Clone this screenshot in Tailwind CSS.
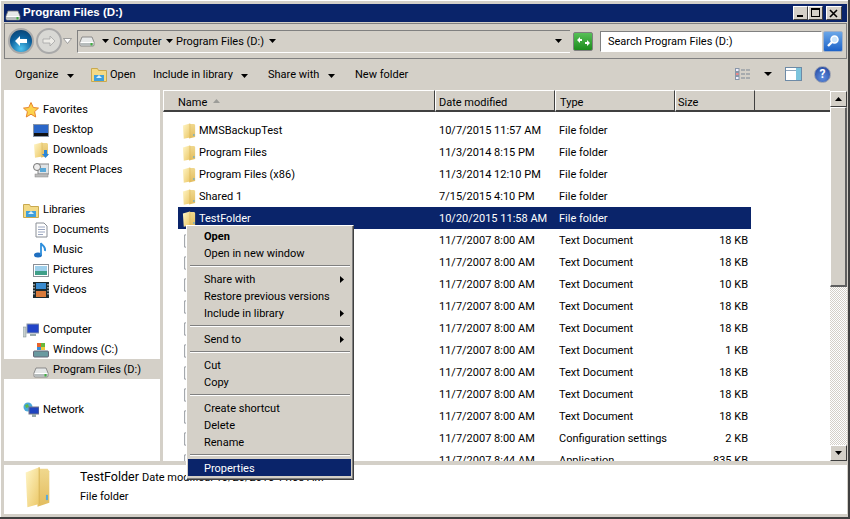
<!DOCTYPE html>
<html><head><meta charset="utf-8">
<script src="https://cdn.jsdelivr.net/npm/@tailwindcss/browser@4"></script>
</head>
<body class="w-[850px] h-[519px] overflow-hidden whitespace-nowrap bg-[#d4d0c8] font-['Roboto','Noto_Sans',sans-serif] text-[11px] text-black">
<svg width="0" height="0" class="absolute">
<defs>
<linearGradient id="fy" x1="0" y1="0" x2="1" y2="1"><stop offset="0" stop-color="#fff6c8"/><stop offset="1" stop-color="#ecc868"/></linearGradient>
<linearGradient id="fb" x1="0" y1="0" x2="0" y2="1"><stop offset="0" stop-color="#f0d88e"/><stop offset="1" stop-color="#e2bc5e"/></linearGradient>
<symbol id="folder" viewBox="0 0 16 16" preserveAspectRatio="none"><path d="M8 1h6l1 1v12l-7 1.500z" fill="url(#fb)"/><path d="M1 2.500 9 .5v14l-7 1.200z" fill="url(#fy)"/><path d="M9 .5v14" stroke="#d9b658" stroke-width=".6"/><rect x="13" y="11" width="1.200" height="2" fill="#5aa9d8"/></symbol>
<symbol id="drive" viewBox="0 0 16 12"><path d="M3 2h10l2 5v3a1 1 0 0 1-1 1H2a1 1 0 0 1-1-1V7z" fill="#e6e8e8" stroke="#777" stroke-width=".8"/><path d="M1.500 7.500h13" stroke="#fff"/><rect x="2" y="8" width="12" height="2.500" fill="#b6bcbc"/><rect x="11.500" y="8" width="2" height="2.500" fill="#3fb03f"/></symbol>
<symbol id="doc" viewBox="0 0 16 16"><path d="M3 1h8l3 3v11H3z" fill="#fff" stroke="#8a8f96"/><path d="M5 5h7M5 7.500h7M5 10h7M5 12.500h5" stroke="#9aa6c0"/></symbol>
</defs>
</svg>
<div class="w-[850px] h-[519px] relative flex flex-col bg-[#d4d0c8] border-b-[2px] border-b-[#404040] border-r-[2px] border-r-[#404040]">
<div class="flex-1 min-h-0 flex flex-col pl-[3px] pr-[1px] pt-[4px] pb-[3px] border-l border-t border-white">
  <!-- title -->
  <div class="h-[18px] mt-[-1px] shrink-0 bg-[#0a246a] flex items-center pl-[1px] pr-[5px] text-white">
    <svg class="w-4 h-3 mt-[3px]"><use href="#drive"/></svg>
    <span class="ml-[2px] font-['Liberation_Sans',sans-serif] font-bold text-[11.5px] leading-none">Program Files (D:)</span>
    <div class="ml-auto flex">
      <div class="w-[15px] h-[14px] bg-[#d4d0c8] border border-[#fff] border-r-[#404040] border-b-[#404040] relative"><div class="absolute left-[3px] top-[8px] w-[6px] h-[2px] bg-black"></div></div>
      <div class="w-[15px] h-[14px] ml-0 bg-[#d4d0c8] border border-[#fff] border-r-[#404040] border-b-[#404040] relative"><div class="absolute left-[2px] top-[1px] w-[9px] h-[9px] border border-black border-t-2"></div></div>
      <div class="w-[16px] h-[14px] ml-[3px] bg-[#d4d0c8] border border-[#fff] border-r-[#404040] border-b-[#404040] flex items-center justify-center"><svg width="10" height="9" viewBox="0 0 10 9"><path d="M1 1l7 7M8 1l-7 7" stroke="#000" stroke-width="1.600"/></svg></div>
    </div>
  </div>
  <!-- address -->
  <div class="h-[36px] shrink-0 mt-[1px] border border-[#808080] flex items-center pl-[3px] pr-[1px]">
    <div class="w-[26px] h-[26px] shrink-0 rounded-full bg-[radial-gradient(circle_at_50%_85%,#4fc4f0,#0a5f9c_55%,#0b3a66)] border-[2px] border-[#a9a9a9] flex items-center justify-center"><svg width="14" height="12" viewBox="0 0 14 12"><path d="M1 6l5-5v3h7v4H6v3z" fill="#fff"/></svg></div>
    <div class="w-[26px] h-[26px] shrink-0 rounded-full bg-[#d8d8d4] border-[2px] border-[#a9a9a9] flex items-center justify-center ml-[2px]"><svg width="14" height="12" viewBox="0 0 14 12"><path d="M13 6L8 1v3H1v4h7v3z" fill="#ecebe6" stroke="#a5a5a5" stroke-width=".8"/></svg></div>
    <svg class="ml-[1px] shrink-0" width="9" height="6" viewBox="0 0 9 6"><path d="M.5.500h8l-4 5z" fill="#fff" stroke="#8c8c8c" stroke-width=".8"/></svg>
    <div class="ml-[5px] w-[493px] shrink-0 h-[23px] border-t border-l border-[#808080] border-b border-b-white flex items-center">
      <svg class="w-4 h-3 ml-[1px]"><use href="#drive"/></svg>
      <svg class="ml-[7px]" width="7" height="4" viewBox="0 0 7 4"><path d="M0 0h7L3.500 4z"/></svg>
      <span class="ml-[4px] w-[46px] pt-[2px]">Computer</span>
      <svg class="ml-[7px]" width="7" height="4" viewBox="0 0 7 4"><path d="M0 0h7L3.500 4z"/></svg>
      <span class="ml-[3px] w-[86px] pt-[2px]">Program Files (D:)</span>
      <svg class="ml-[7px]" width="7" height="4" viewBox="0 0 7 4"><path d="M0 0h7L3.500 4z"/></svg>
      <svg class="ml-auto mr-[8px]" width="7" height="4" viewBox="0 0 7 4"><path d="M0 0h7L3.500 4z"/></svg>
    </div>
    <div class="ml-[3px] w-[20px] h-[19px] shrink-0 rounded-[2px] bg-[linear-gradient(#58c058,#1c8c1c)] border border-[#808080] flex items-center justify-center"><svg width="15" height="11" viewBox="0 0 15 11"><path d="M1 4l3-3v2h2v2H4v2zM14 7l-3 3V8H9V6h2V4z" fill="#fff"/></svg></div>
    <div class="ml-[7px] w-[222px] h-[21px] shrink-0 bg-white border border-[#808080] border-r-white border-b-white flex items-center pl-[7px] pt-[2px]">Search Program Files (D:)</div>
    <div class="w-[20px] h-[21px] shrink-0 ml-[1px] rounded-[2px] bg-[linear-gradient(#6aa6e8,#1c62c8)] border border-[#a0b0c8] flex items-center justify-center"><svg width="14" height="14" viewBox="0 0 14 14"><circle cx="8.500" cy="5.500" r="3.500" fill="#cfe6fa" stroke="#fff" stroke-width="1.500"/><path d="M6 8l-4 4" stroke="#fff" stroke-width="2.400"/></svg></div>
  </div>
  <!-- toolbar -->
  <div class="h-[31px] shrink-0 flex items-center pl-[11px] pr-[16px] pt-[2px]">
    <span class="w-[44px] shrink-0">Organize</span>
    <svg class="ml-[8px] shrink-0" width="7" height="4" viewBox="0 0 7 4"><path d="M0 0h7L3.500 4z"/></svg>
    <svg class="ml-[17px] shrink-0 mb-[2px]" width="16" height="15" viewBox="0 0 16 15"><path d="M.5 1.500h6l1 2h8v11H.5z" fill="#f3da86" stroke="#c9a94f"/><rect x="3" y="8" width="10" height="6" fill="#3f9fdc"/><path d="M5 11l3-3 3 3z" fill="#d8f0fb"/></svg>
    <span class="ml-[3px] w-[27px] shrink-0">Open</span>
    <span class="ml-[16px] w-[79px] shrink-0">Include in library</span>
    <svg class="ml-[9px] shrink-0" width="7" height="4" viewBox="0 0 7 4"><path d="M0 0h7L3.500 4z"/></svg>
    <span class="ml-[20px] w-[51px] shrink-0">Share with</span>
    <svg class="ml-[9px] shrink-0" width="7" height="4" viewBox="0 0 7 4"><path d="M0 0h7L3.500 4z"/></svg>
    <span class="ml-[20px] shrink-0">New folder</span>
    <svg class="ml-auto mb-[3px]" width="16" height="12" viewBox="0 0 16 12"><rect x=".5" y=".5" width="3.500" height="3" fill="#eef" stroke="#8896a8"/><rect x=".5" y="4.500" width="3.500" height="3" fill="#e88" stroke="#8896a8"/><rect x=".5" y="8.500" width="3.500" height="3" fill="#eef" stroke="#8896a8"/><path d="M6 2h9M6 6h9M6 10h9" stroke="#7a8694" stroke-dasharray="4 1"/></svg>
    <svg class="ml-[13px] mb-[3px]" width="8" height="4" viewBox="0 0 8 4"><path d="M0 0h8L4 4z"/></svg>
    <svg class="ml-[13px] mb-[3px]" width="17" height="14" viewBox="0 0 17 14"><rect x=".5" y=".5" width="16" height="13" fill="#fff" stroke="#6d8aa6"/><path d="M1 3.500h10" stroke="#8fa6bc"/><rect x="11" y="1" width="5" height="12" fill="#7cc4dc"/></svg>
    <div class="ml-[12px] mb-[3px] w-[17px] h-[17px] rounded-full bg-[radial-gradient(circle_at_50%_70%,#5f8fe0,#1e3f98)] border border-[#9aa0b0] flex items-center justify-center text-white font-bold text-[12px] leading-none">?</div>
  </div>
  <!-- body -->
  <div class="flex-1 min-h-0 flex">
    <nav class="w-[156px] bg-white shrink-0 pt-[9px] leading-[20px] flex flex-col">
      <div class="h-[20px] pt-[2px] flex items-center pl-[19px]"><svg width="16" height="16" viewBox="0 0 16 16"><path d="M8 .5l2.300 5 5.200.6-3.900 3.500 1.100 5.400L8 12.200 3.300 15l1.100-5.400L.5 6.100l5.200-.6z" fill="#fcd34d" stroke="#e8842c"/></svg><span class="ml-[4px]">Favorites</span></div>
      <div class="h-[20px] pt-[2px] flex items-center pl-[29px]"><svg width="16" height="13" viewBox="0 0 16 13"><rect width="16" height="13" fill="#8895a8"/><rect x="1" y="1" width="14" height="8" fill="#2a66c8"/><rect x="1" y="9" width="14" height="3" fill="#111"/></svg><span class="ml-[4px]">Desktop</span></div>
      <div class="h-[20px] pt-[2px] flex items-center pl-[29px]"><svg width="16" height="16" viewBox="0 0 16 16"><use href="#folder"/><path d="M11 8h3v4h2l-3.500 4L9 12h2z" fill="#2a86d8"/></svg><span class="ml-[4px]">Downloads</span></div>
      <div class="h-[20px] pt-[2px] flex items-center pl-[29px]"><svg width="16" height="15" viewBox="0 0 16 15"><rect x="5" y="1" width="11" height="10" fill="#dfe3e6" stroke="#888"/><circle cx="4" cy="4" r="3.500" fill="#eee" stroke="#777"/><rect x="7" y="5" width="6" height="4" fill="#5aa9d8"/><rect x="2" y="11" width="13" height="3" fill="#bbb" stroke="#888" stroke-width=".5"/></svg><span class="ml-[4px]">Recent Places</span></div>
      <div class="h-[20px]"></div>
      <div class="h-[20px] pt-[2px] flex items-center pl-[19px]"><svg width="16" height="15" viewBox="0 0 16 15"><path d="M.5 1.500h6l1 2h8v11H.5z" fill="#f3da86" stroke="#c9a94f"/><rect x="3" y="8" width="10" height="6" fill="#3f9fdc"/><path d="M5 11l3-3 3 3z" fill="#d8f0fb"/></svg><span class="ml-[4px]">Libraries</span></div>
      <div class="h-[20px] pt-[2px] flex items-center pl-[29px]"><svg width="16" height="16" viewBox="0 0 16 16"><use href="#doc"/></svg><span class="ml-[4px]">Documents</span></div>
      <div class="h-[20px] pt-[2px] flex items-center pl-[29px]"><svg width="16" height="16" viewBox="0 0 16 16"><ellipse cx="5" cy="13" rx="4" ry="2.500" fill="#1f6fc0"/><path d="M8 13V1c1 3 5 3 4 8" fill="none" stroke="#2f8fdc" stroke-width="1.800"/></svg><span class="ml-[4px]">Music</span></div>
      <div class="h-[20px] pt-[2px] flex items-center pl-[29px]"><svg width="16" height="13" viewBox="0 0 16 13"><rect x=".5" y=".5" width="15" height="12" fill="#fff" stroke="#8a8f96"/><rect x="2" y="2" width="12" height="5" fill="#9fd0ec"/><rect x="2" y="7" width="12" height="4" fill="#3f9f88"/></svg><span class="ml-[4px]">Pictures</span></div>
      <div class="h-[20px] pt-[2px] flex items-center pl-[29px]"><svg width="16" height="16" viewBox="0 0 16 16"><rect width="16" height="16" fill="#1c2a2e"/><rect x="3" y="1" width="10" height="6" fill="#3a8cd0"/><rect x="3" y="9" width="10" height="6" fill="#d87a3a"/><path d="M1 2v12M15 2v12" stroke="#fff" stroke-dasharray="1.500 1.500"/></svg><span class="ml-[4px]">Videos</span></div>
      <div class="h-[20px]"></div>
      <div class="h-[20px] pt-[2px] flex items-center pl-[19px]"><svg width="16" height="15" viewBox="0 0 16 15"><rect x="4" y="1" width="12" height="9" fill="#2244c8" stroke="#8a96a8"/><rect x="7" y="11" width="6" height="2" fill="#9aa"/><rect x="0" y="4" width="3" height="10" fill="#c8d0d0" stroke="#7a8a8a" stroke-width=".5"/></svg><span class="ml-[4px]">Computer</span></div>
      <div class="h-[20px] pt-[2px] flex items-center pl-[29px]"><svg width="16" height="15" viewBox="0 0 16 15"><rect x="4" y="0" width="4" height="4" fill="#e8642c"/><rect x="8" y="0" width="4" height="4" fill="#68b83c"/><rect x="4" y="4" width="4" height="3" fill="#3a8cd8"/><rect x="8" y="4" width="4" height="3" fill="#f0c83c"/><rect x=".5" y="8" width="15" height="6" rx="1" fill="#6a9aa0" stroke="#667"/></svg><span class="ml-[4px]">Windows (C:)</span></div>
      <div class="h-[20px] pt-[2px] flex items-center pl-[29px] bg-[#d4d0c8]"><svg width="16" height="12" viewBox="0 0 16 12" class="mt-[3px]"><use href="#drive"/></svg><span class="ml-[4px]">Program Files (D:)</span></div>
      <div class="h-[20px]"></div>
      <div class="h-[20px] pt-[2px] flex items-center pl-[19px]"><svg width="16" height="16" viewBox="0 0 16 16"><circle cx="5" cy="5" r="4.500" fill="#4aa8dc"/><path d="M2 3l3-1 1 3-3 1z" fill="#5cb84c"/><rect x="6" y="5" width="10" height="7" fill="#1f44c0" stroke="#778"/><rect x="9" y="12" width="4" height="3" fill="#9aa"/></svg><span class="ml-[4px]">Network</span></div>
    </nav>
    <div class="w-[3px] shrink-0"></div>
    <main class="flex-1 min-w-0 bg-white flex">
      <div class="flex-1 min-w-0 overflow-hidden">
        <div class="h-[22px] flex bg-[#d4d0c8] leading-[16px]">
          <div class="w-[272px] shrink-0 border-t border-l border-white border-b-[2px] border-b-[#404040] border-r border-r-[#404040] pl-[14px] pt-[4px] flex items-start">Name<svg class="ml-[6px] mt-[4px]" width="7" height="4" viewBox="0 0 7 4"><path d="M0 4h7L3.500 0z" fill="#9c9c98"/></svg></div>
          <div class="w-[120px] shrink-0 border-t border-l border-white border-b-[2px] border-b-[#404040] border-r border-r-[#404040] pl-[3px] pt-[4px]">Date modified</div>
          <div class="w-[120px] shrink-0 border-t border-l border-white border-b-[2px] border-b-[#404040] border-r border-r-[#404040] pl-[4px] pt-[4px]">Type</div>
          <div class="w-[80px] shrink-0 border-t border-l border-white border-b-[2px] border-b-[#404040] border-r border-r-[#404040] pl-[2px] pt-[4px]">Size</div>
          <div class="flex-1 border-t border-white border-b-[2px] border-b-[#404040]"></div>
        </div>
        <div class="pt-[7px] ml-[15px] w-[573px] text-black">
          <div class="h-[22px] pt-[2px] flex items-center"><svg class="ml-[4px] w-[14px] h-4"><use href="#folder"/></svg><span class="ml-[3px] w-[240px]">MMSBackupTest</span><span class="w-[120px]">10/7/2015 11:57 AM</span><span class="w-[100px]">File folder</span></div>
          <div class="h-[22px] pt-[2px] flex items-center"><svg class="ml-[4px] w-[14px] h-4"><use href="#folder"/></svg><span class="ml-[3px] w-[240px]">Program Files</span><span class="w-[120px]">11/3/2014 8:15 PM</span><span class="w-[100px]">File folder</span></div>
          <div class="h-[22px] pt-[2px] flex items-center"><svg class="ml-[4px] w-[14px] h-4"><use href="#folder"/></svg><span class="ml-[3px] w-[240px]">Program Files (x86)</span><span class="w-[120px]">11/3/2014 12:10 PM</span><span class="w-[100px]">File folder</span></div>
          <div class="h-[22px] pt-[2px] flex items-center"><svg class="ml-[4px] w-[14px] h-4"><use href="#folder"/></svg><span class="ml-[3px] w-[240px]">Shared 1</span><span class="w-[120px]">7/15/2015 4:10 PM</span><span class="w-[100px]">File folder</span></div>
          <div class="h-[22px] pt-[2px] flex items-center bg-[#0a246a] text-white"><svg class="ml-[4px] w-[14px] h-4"><use href="#folder"/></svg><span class="ml-[3px] w-[240px]">TestFolder</span><span class="w-[120px]">10/20/2015 11:58 AM</span><span class="w-[100px]">File folder</span></div>
          <div class="h-[22px] pt-[2px] flex items-center"><svg class="ml-[4px] w-[14px] h-4"><use href="#doc"/></svg><span class="ml-[3px] w-[240px]"></span><span class="w-[120px]">11/7/2007 8:00 AM</span><span class="w-[120px]">Text Document</span><span class="w-[69px] text-right">18 KB</span></div>
          <div class="h-[22px] pt-[2px] flex items-center"><svg class="ml-[4px] w-[14px] h-4"><use href="#doc"/></svg><span class="ml-[3px] w-[240px]"></span><span class="w-[120px]">11/7/2007 8:00 AM</span><span class="w-[120px]">Text Document</span><span class="w-[69px] text-right">18 KB</span></div>
          <div class="h-[22px] pt-[2px] flex items-center"><svg class="ml-[4px] w-[14px] h-4"><use href="#doc"/></svg><span class="ml-[3px] w-[240px]"></span><span class="w-[120px]">11/7/2007 8:00 AM</span><span class="w-[120px]">Text Document</span><span class="w-[69px] text-right">10 KB</span></div>
          <div class="h-[22px] pt-[2px] flex items-center"><svg class="ml-[4px] w-[14px] h-4"><use href="#doc"/></svg><span class="ml-[3px] w-[240px]"></span><span class="w-[120px]">11/7/2007 8:00 AM</span><span class="w-[120px]">Text Document</span><span class="w-[69px] text-right">18 KB</span></div>
          <div class="h-[22px] pt-[2px] flex items-center"><svg class="ml-[4px] w-[14px] h-4"><use href="#doc"/></svg><span class="ml-[3px] w-[240px]"></span><span class="w-[120px]">11/7/2007 8:00 AM</span><span class="w-[120px]">Text Document</span><span class="w-[69px] text-right">18 KB</span></div>
          <div class="h-[22px] pt-[2px] flex items-center"><svg class="ml-[4px] w-[14px] h-4"><use href="#doc"/></svg><span class="ml-[3px] w-[240px]"></span><span class="w-[120px]">11/7/2007 8:00 AM</span><span class="w-[120px]">Text Document</span><span class="w-[69px] text-right">1 KB</span></div>
          <div class="h-[22px] pt-[2px] flex items-center"><svg class="ml-[4px] w-[14px] h-4"><use href="#doc"/></svg><span class="ml-[3px] w-[240px]"></span><span class="w-[120px]">11/7/2007 8:00 AM</span><span class="w-[120px]">Text Document</span><span class="w-[69px] text-right">18 KB</span></div>
          <div class="h-[22px] pt-[2px] flex items-center"><svg class="ml-[4px] w-[14px] h-4"><use href="#doc"/></svg><span class="ml-[3px] w-[240px]"></span><span class="w-[120px]">11/7/2007 8:00 AM</span><span class="w-[120px]">Text Document</span><span class="w-[69px] text-right">18 KB</span></div>
          <div class="h-[22px] pt-[2px] flex items-center"><svg class="ml-[4px] w-[14px] h-4"><use href="#doc"/></svg><span class="ml-[3px] w-[240px]"></span><span class="w-[120px]">11/7/2007 8:00 AM</span><span class="w-[120px]">Text Document</span><span class="w-[69px] text-right">18 KB</span></div>
          <div class="h-[22px] pt-[2px] flex items-center"><svg class="ml-[4px] w-[14px] h-4"><use href="#doc"/></svg><span class="ml-[3px] w-[240px]"></span><span class="w-[120px]">11/7/2007 8:00 AM</span><span class="w-[120px]">Configuration settings</span><span class="w-[69px] text-right">2 KB</span></div>
          <div class="h-[22px] pt-[2px] flex items-center"><svg class="ml-[4px] w-[14px] h-4"><use href="#doc"/></svg><span class="ml-[3px] w-[240px]"></span><span class="w-[120px]">11/7/2007 8:44 AM</span><span class="w-[120px]">Application</span><span class="w-[69px] text-right">835 KB</span></div>
        </div>
      </div>
      <div class="w-[17px] shrink-0 flex flex-col bg-[#d4d0c8]">
        <div class="h-[16px] mt-[1px] shrink-0 border border-white border-r-[#404040] border-b-[#404040] flex items-center justify-center"><svg width="7" height="4" viewBox="0 0 7 4"><path d="M0 4h7L3.500 0z"/></svg></div>
        <div class="h-[180px] shrink-0 border border-white border-r-2 border-b-2 border-r-[#606060] border-b-[#606060]"></div>
        <div class="flex-1 bg-[repeating-conic-gradient(#d4d0c8_0_25%,#fff_0_50%)] bg-[length:2px_2px]"></div>
        <div class="h-[16px] shrink-0 border border-white border-r-[#404040] border-b-[#404040] flex items-center justify-center"><svg width="7" height="4" viewBox="0 0 7 4"><path d="M0 0h7L3.500 4z"/></svg></div>
      </div>
    </main>
  </div>
  <!-- details -->
  <div class="h-[49px] shrink-0 mt-[4px] bg-white flex pl-[20px] relative">
    <svg class="w-[27px] h-[42px] mt-[1px]"><use href="#folder"/></svg>
    <div class="ml-[29px] pt-[2px]">
      <div class="flex items-center h-[20px]"><span class="text-[12.5px] w-[57px]">TestFolder</span><span class="ml-[5px] mt-[3px]">Date modified: 10/20/2015 11:58 AM</span></div>
      <div class="mt-[-1px] leading-[22px]">File folder</div>
    </div>
  </div>
</div>
<!-- context menu -->
<div class="absolute left-[186px] top-[225px] w-[168px] bg-[#d4d0c8] border border-white border-r-[#404040] border-b-[#404040] shadow-[inset_-1px_-1px_0_#808080] pt-[1px] px-[1px] pb-[3px] leading-[19px]">
  <div class="h-[17px] pl-[16px] font-bold">Open</div>
  <div class="h-[17px] pl-[16px]">Open in new window</div>
  <div class="h-[9px] flex items-center mx-[2px]"><div class="w-full h-[2px] border-t border-[#808080] border-b border-b-white"></div></div>
  <div class="h-[17px] pl-[16px] pr-[8px] pt-[2px] flex items-center justify-between">Share with<svg width="4" height="7" viewBox="0 0 4 7"><path d="M0 0v7l4-3.500z"/></svg></div>
  <div class="h-[17px] pl-[16px]">Restore previous versions</div>
  <div class="h-[17px] pl-[16px] pr-[8px] pt-[2px] flex items-center justify-between">Include in library<svg width="4" height="7" viewBox="0 0 4 7"><path d="M0 0v7l4-3.500z"/></svg></div>
  <div class="h-[9px] flex items-center mx-[2px]"><div class="w-full h-[2px] border-t border-[#808080] border-b border-b-white"></div></div>
  <div class="h-[17px] pl-[16px] pr-[8px] pt-[2px] flex items-center justify-between">Send to<svg width="4" height="7" viewBox="0 0 4 7"><path d="M0 0v7l4-3.500z"/></svg></div>
  <div class="h-[9px] flex items-center mx-[2px]"><div class="w-full h-[2px] border-t border-[#808080] border-b border-b-white"></div></div>
  <div class="h-[17px] pl-[16px]">Cut</div>
  <div class="h-[17px] pl-[16px]">Copy</div>
  <div class="h-[9px] flex items-center mx-[2px]"><div class="w-full h-[2px] border-t border-[#808080] border-b border-b-white"></div></div>
  <div class="h-[17px] pl-[16px]">Create shortcut</div>
  <div class="h-[17px] pl-[16px]">Delete</div>
  <div class="h-[17px] pl-[16px]">Rename</div>
  <div class="h-[9px] flex items-center mx-[2px]"><div class="w-full h-[2px] border-t border-[#808080] border-b border-b-white"></div></div>
  <div class="h-[17px] pl-[16px] mr-[1px] bg-[#0a246a] text-white">Properties</div>
</div>
</div>
</body></html>
